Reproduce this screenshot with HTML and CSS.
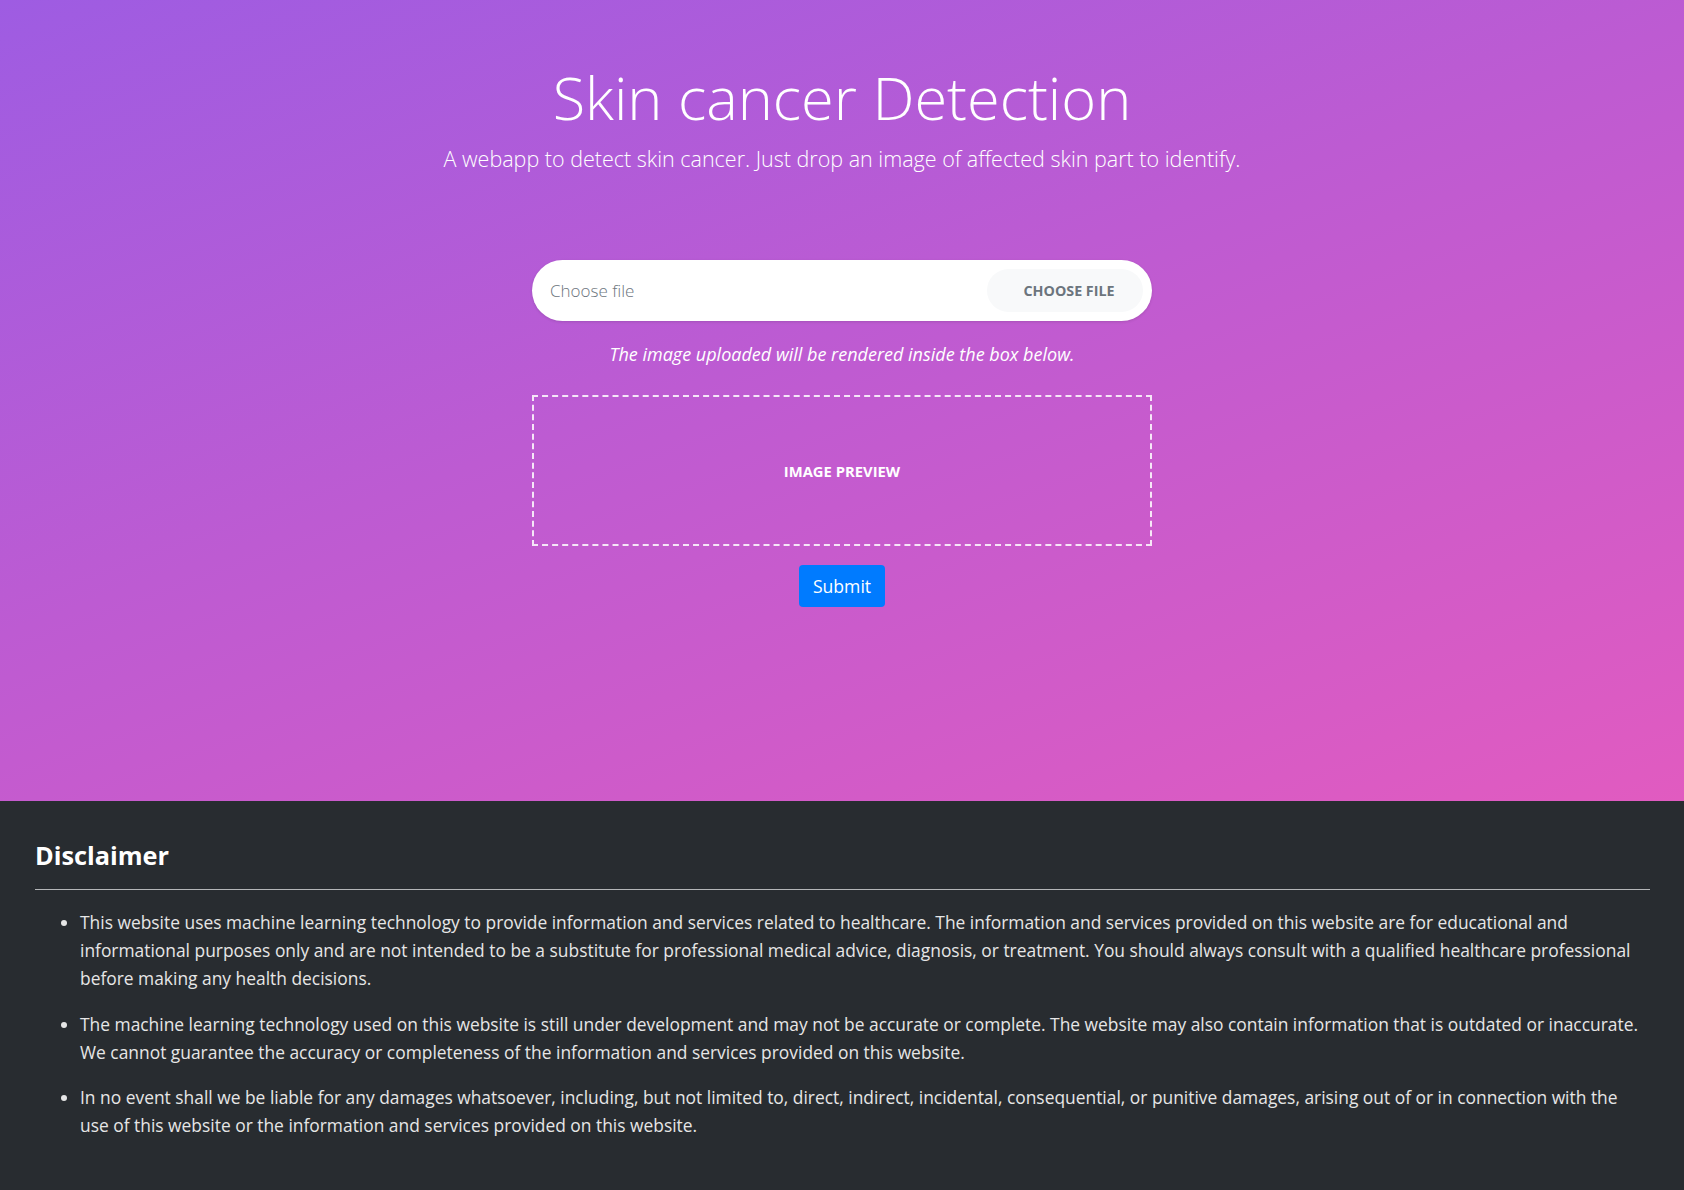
FILE: index.html
```html
<!DOCTYPE html>
<html lang="en">
<head>
<meta charset="utf-8">
<title>Skin cancer Detection</title>
<link rel="stylesheet" href="styles.css">
</head>
<body>
<section class="hero">
  <h1 class="title">Skin cancer Detection</h1>
  <p class="lead">A webapp to detect skin cancer. Just drop an image of affected skin part to identify.</p>
  <div class="upload">
    <label class="file-pill">
      <span class="placeholder">Choose file</span>
      <span class="file-btn">CHOOSE FILE</span>
    </label>
    <p class="note">The image uploaded will be rendered inside the box below.</p>
    <div class="preview">IMAGE PREVIEW</div>
    <button class="submit" type="button">Submit</button>
  </div>
</section>
<footer class="disclaimer">
  <h3 class="disclaimer-title">Disclaimer</h3>
  <hr class="rule">
  <ul class="points">
    <li>This website uses machine learning technology to provide information and services related to healthcare. The information and services provided on this website are for educational and informational purposes only and are not intended to be a substitute for professional medical advice, diagnosis, or treatment. You should always consult with a qualified healthcare professional before making any health decisions.</li>
    <li>The machine learning technology used on this website is still under development and may not be accurate or complete. The website may also contain information that is outdated or inaccurate. We cannot guarantee the accuracy or completeness of the information and services provided on this website.</li>
    <li>In no event shall we be liable for any damages whatsoever, including, but not limited to, direct, indirect, incidental, consequential, or punitive damages, arising out of or in connection with the use of this website or the information and services provided on this website.</li>
  </ul>
</footer>
</body>
</html>
```

FILE: styles.css
```css
html, body {
  margin: 0;
  padding: 0;
}
body {
  font-family: "Open Sans", "Noto Sans", "DejaVu Sans", sans-serif;
  background: #282c30;
  color: #fff;
}
.hero {
  height: 801px;
  box-sizing: border-box;
  padding-top: 62px;
  background: linear-gradient(160deg, #9e5ce2 0%, #bd5bd2 45%, #e15bc0 100%);
  display: flex;
  flex-direction: column;
  align-items: center;
}
.title {
  margin: 0;
  font-size: 59.5px;
  line-height: 70px;
  font-weight: 300;
  color: #fff;
}
.lead {
  margin: 12px 0 0;
  font-size: 21.5px;
  line-height: 30px;
  font-weight: 300;
  color: #fff;
}
.upload {
  margin-top: 86px;
  width: 620px;
  display: flex;
  flex-direction: column;
  align-items: center;
}
.file-pill {
  width: 100%;
  height: 61px;
  box-sizing: border-box;
  background: #fff;
  border-radius: 31px;
  box-shadow: 0 1px 3px rgba(0,0,0,0.12);
  display: flex;
  align-items: center;
  justify-content: space-between;
  padding: 0 9px 0 18px;
}
.placeholder {
  font-size: 17px;
  font-weight: 300;
  color: #6c757d;
}
.file-btn {
  width: 156px;
  height: 43px;
  box-sizing: border-box;
  padding-left: 8px;
  border-radius: 22px;
  background: #f8f9fa;
  color: #6c757d;
  font-size: 14.3px;
  font-weight: 700;
  display: flex;
  align-items: center;
  justify-content: center;
}
.note {
  margin: 20px 0 0;
  font-size: 18px;
  line-height: 26px;
  font-style: italic;
  color: #fff;
}
.preview {
  margin-top: 28px;
  width: 100%;
  height: 151px;
  box-sizing: border-box;
  border: 2px dashed rgba(255,255,255,0.85);
  display: flex;
  align-items: center;
  justify-content: center;
  font-size: 14.8px;
  font-weight: 700;
  color: #fff;
}
.submit {
  margin-top: 19px;
  width: 86px;
  height: 42px;
  border: 0;
  border-radius: 4px;
  background: #007bff;
  color: #fff;
  font-family: inherit;
  font-size: 17.6px;
  padding: 0;
}
.disclaimer {
  padding: 37px 34px 60px 35px;
}
.disclaimer-title {
  margin: 0;
  font-size: 25.3px;
  line-height: 34px;
  font-weight: 700;
  color: #fff;
}
.rule {
  margin: 17px 0 0;
  border: 0;
  border-top: 1px solid #b4b6b8;
}
.points {
  margin: 18px 0 0;
  padding-left: 45px;
  font-size: 17.4px;
  line-height: 28px;
  color: #e6e6e6;
}
.points li {
  margin-bottom: 17.5px;
}
```
